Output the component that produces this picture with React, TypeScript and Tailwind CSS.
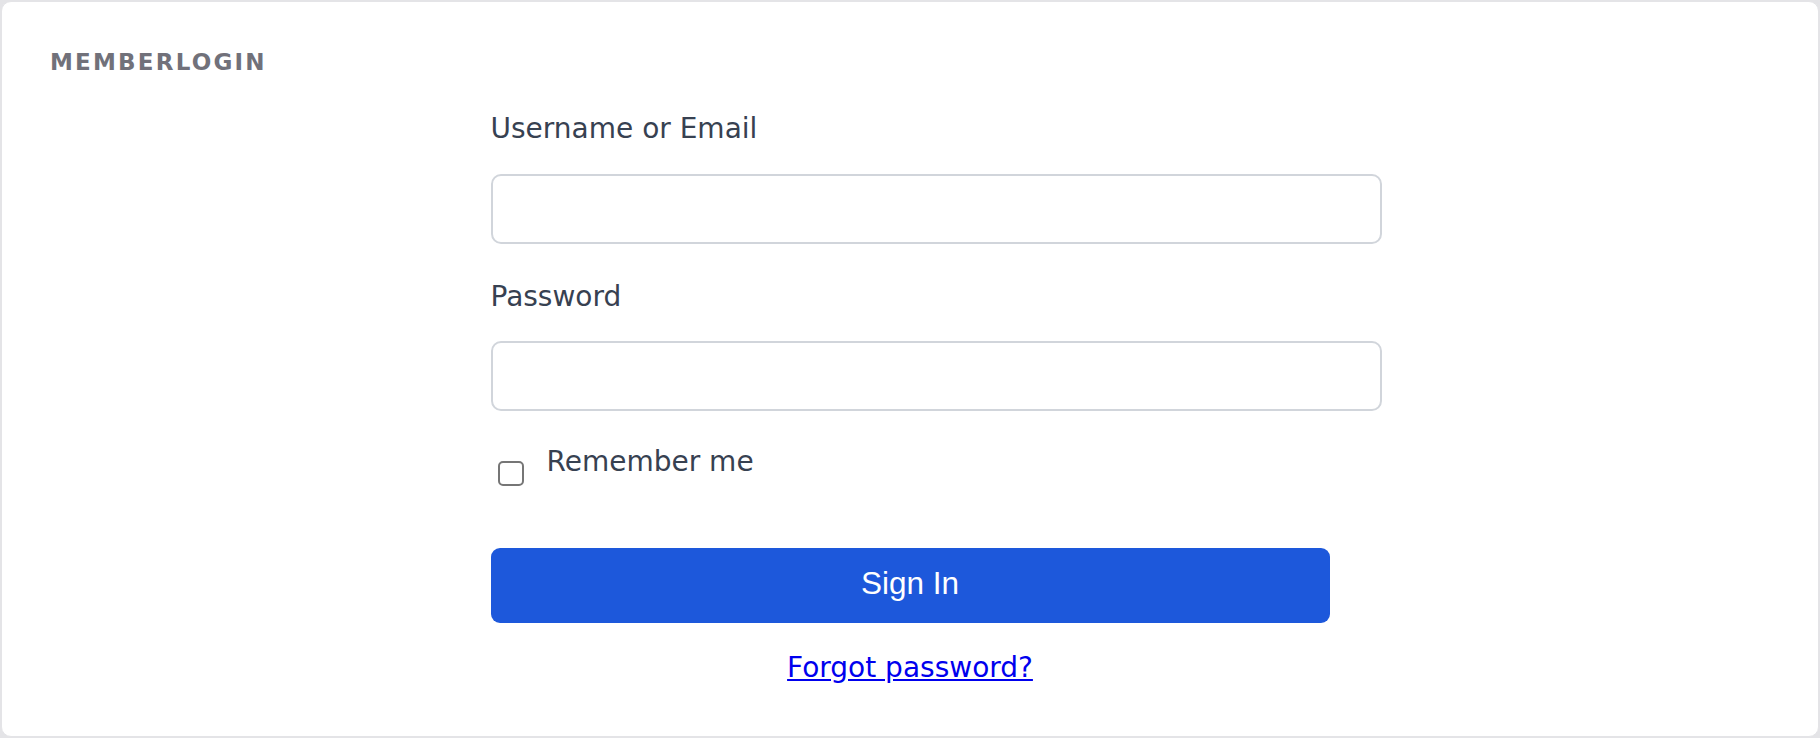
import React, { useState } from 'react';

// Member login card
const App: React.FC = () => {
  const [username, setUsername] = useState('');
  const [password, setPassword] = useState('');
  const [remember, setRemember] = useState(false);

  return (
    <div className="h-[738px] w-full bg-[#e4e4e7] p-px font-['DejaVu_Sans',sans-serif]">
      <div className="h-full w-full bg-white border border-[#e4e4e7] rounded-[10px] pt-[47px] overflow-hidden">
        <div className="pl-[48px] text-[23px] leading-[26px] font-bold tracking-[2.2px] text-[#71717a]">
          MEMBERLOGIN
        </div>

        <form
          className="w-[839px] mx-auto mt-[37px] flex flex-col items-start"
          onSubmit={(e) => e.preventDefault()}
        >
          <label htmlFor="username" className="text-[28px] leading-[34px] text-[#374151]">
            Username or Email
          </label>
          <input
            id="username"
            type="text"
            value={username}
            onChange={(e) => setUsername(e.target.value)}
            className="mt-[28px] w-[891px] h-[70px] shrink-0 border-2 border-[#d1d5db] rounded-[10px] px-[21px] text-[28px] outline-none"
          />

          <label htmlFor="password" className="mt-[36px] text-[28px] leading-[34px] text-[#374151]">
            Password
          </label>
          <input
            id="password"
            type="password"
            value={password}
            onChange={(e) => setPassword(e.target.value)}
            className="mt-[27px] w-[891px] h-[70px] shrink-0 border-2 border-[#d1d5db] rounded-[10px] px-[21px] text-[28px] outline-none"
          />

          {/* Remember me */}
          <label className="mt-[34px] flex items-start gap-[23px] pl-[7px] cursor-pointer">
            <input
              type="checkbox"
              checked={remember}
              onChange={(e) => setRemember(e.target.checked)}
              className="appearance-none mt-[16px] w-[26px] h-[25px] border-2 border-[#767676] rounded-[5px] bg-white checked:bg-[#1d58db] checked:border-[#1d58db]"
            />
            <span className="text-[28px] leading-[34px] text-[#374151]">Remember me</span>
          </label>

          <button
            type="submit"
            className="mt-[62px] w-full h-[75px] shrink-0 rounded-[9px] bg-[#1d58db] text-white text-[31.5px] pb-[4px] font-['Liberation_Sans',sans-serif]"
          >
            Sign In
          </button>

          <div className="mt-[28px] w-full text-center">
            <a href="#" className="text-[28px] leading-[34px] text-[#0000ee] underline">
              Forgot password?
            </a>
          </div>
        </form>
      </div>
    </div>
  );
};

export default App;
